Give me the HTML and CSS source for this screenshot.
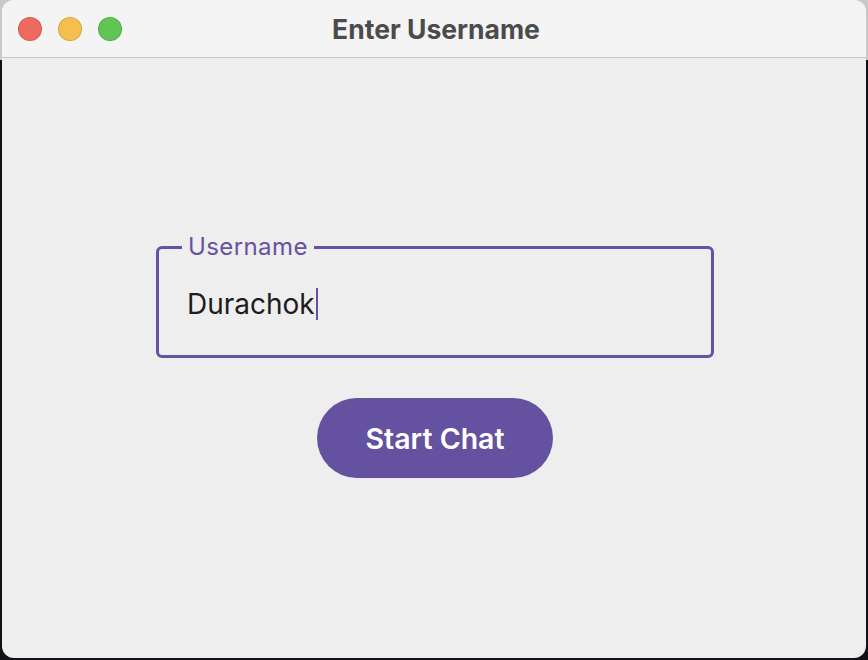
FILE: index.html
```html
<!DOCTYPE html>
<html>
<head>
<meta charset="utf-8">
<link rel="stylesheet" href="styles.css">
</head>
<body>
<div class="window">
  <div class="titlebar">
    <div class="lights">
      <span class="light red"></span>
      <span class="light yellow"></span>
      <span class="light green"></span>
    </div>
    <div class="title">Enter Username</div>
  </div>
  <div class="content">
    <fieldset class="field">
      <legend class="label">Username</legend>
      <div class="value">Durachok<span class="caret"></span></div>
    </fieldset>
    <button class="start">Start Chat</button>
  </div>
</div>
</body>
</html>
```
FILE: styles.css
```css
html, body {
  margin: 0;
  padding: 0;
}
body {
  width: 868px;
  height: 660px;
  background: linear-gradient(to bottom, #c9c9c9 0, #c9c9c9 60px, #121214 60px);
  font-family: Inter, "Noto Sans", sans-serif;
  overflow: hidden;
}
.window {
  margin-left: 2px;
  width: 864px;
  height: 658px;
  border-radius: 12px;
  background: #eeeeee;
  overflow: hidden;
  display: flex;
  flex-direction: column;
}
.titlebar {
  height: 57px;
  flex: none;
  background: #f3f4f3;
  border-bottom: 1px solid #c6c6c6;
  display: flex;
  align-items: center;
  position: relative;
}
.lights {
  display: flex;
  gap: 16px;
  padding-left: 16px;
}
.light {
  width: 22px;
  height: 22px;
  border-radius: 50%;
  border: 1px solid rgba(0,0,0,0.12);
}
.red { background: #ee6a5f; }
.yellow { background: #f5be4f; }
.green { background: #61c554; }
.title {
  position: absolute;
  left: 0;
  right: 0;
  top: 0;
  bottom: 0;
  display: flex;
  align-items: center;
  justify-content: center;
  font-size: 26.5px;
  font-weight: 700;
  color: #4b4b4b;
  padding-left: 4px;
}
.content {
  flex: 1;
  display: flex;
  flex-direction: column;
  align-items: center;
  padding-top: 176px;
  padding-left: 2px;
}
.field {
  box-sizing: border-box;
  width: 558px;
  height: 124px;
  margin: 0;
  border: 3px solid #6651a2;
  border-radius: 6px;
  padding: 0 0 0 28px;
}
.label {
  padding: 0 6px;
  margin-left: -5px;
  font-size: 24px;
  line-height: 26px;
  color: #6651a2;
  letter-spacing: 0.4px;
}
.value {
  margin-top: 27px;
  font-size: 28px;
  line-height: 34px;
  color: #1d1b20;
  display: flex;
  align-items: center;
}
.caret {
  display: inline-block;
  width: 2px;
  height: 32px;
  background: #6651a2;
  margin-left: 1px;
}
.start {
  margin-top: 40px;
  width: 236px;
  height: 80px;
  border: none;
  border-radius: 40px;
  background: #6451a0;
  color: #ffffff;
  font-family: Inter, "Noto Sans", sans-serif;
  font-size: 28.5px;
  font-weight: 600;
  padding: 0;
}
```
